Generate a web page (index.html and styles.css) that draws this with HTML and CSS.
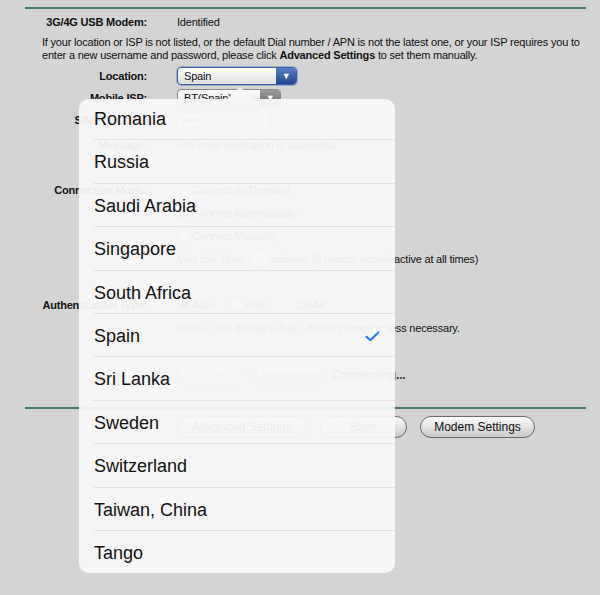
FILE: index.html
```html
<!DOCTYPE html>
<html lang="en">
<head>
  <meta charset="UTF-8" />
  <title>3G/4G Settings</title>
  <link rel="stylesheet" href="styles.css">
</head>
<body>
  <div class="page">
    <div class="rule rule-top"></div>

    <div class="row first">
      <div class="label">3G/4G USB Modem:</div>
      <div class="value">Identified</div>
    </div>

    <p class="hint">If your location or ISP is not listed, or the default Dial number / APN is not the latest one, or your ISP requires you to<br>enter a new username and password, please click <b>Advanced Settings</b> to set them manually.</p>

    <div class="row loc">
      <div class="label">Location:</div>
      <div class="value">
        <div class="select active" style="width: 120px;">
          <span class="select-text">Spain</span>
          <span class="select-arrow">&#9660;</span>
        </div>
      </div>
    </div>

    <div class="row isp">
      <div class="label">Mobile ISP:</div>
      <div class="value">
        <div class="select" style="width: 104px;">
          <span class="select-text">BT(Spain)</span>
          <span class="select-arrow">&#9660;</span>
        </div>
      </div>
    </div>

    <div class="row sim">
      <div class="label">SIM PIN Code:</div>
      <div class="value"><div class="field pin">&bull;&bull;&bull;&bull;</div></div>
    </div>

    <div class="row msg">
      <div class="label">Message:</div>
      <div class="value">PIN code verification is successful</div>
    </div>

    <div class="row section">
      <div class="label">Connection Mode:</div>
      <div class="value"><span class="radio"></span>Connect on Demand</div>
    </div>
    <div class="row">
      <div class="label"></div>
      <div class="value"><span class="radio on"></span>Connect Automatically</div>
    </div>
    <div class="row">
      <div class="label"></div>
      <div class="value"><span class="radio"></span>Connect Manually</div>
    </div>
    <div class="row">
      <div class="label"></div>
      <div class="value">Max Idle Time: <span class="field idle"></span> minutes (0 means remain active at all times)</div>
    </div>

    <div class="row section auth">
      <div class="label">Authentication Type:</div>
      <div class="value">
        <span class="radio on"></span>Auto
        <span class="radio spaced"></span>PAP
        <span class="radio spaced"></span>CHAP
      </div>
    </div>
    <div class="row">
      <div class="label"></div>
      <div class="value"><span class="notice">Notice:</span> The default is Auto, do not change unless necessary.</div>
    </div>

    <div class="row section">
      <div class="label"></div>
      <div class="value buttons">
        <button class="pill off" style="width: 64px;">Connect</button>
        <button class="pill dim" style="width: 70px;">Disconnect</button>
        <span class="status">Connecting...</span>
      </div>
    </div>

    <div class="rule rule-bottom"></div>

    <div class="row actions">
      <div class="label"></div>
      <div class="value buttons">
        <button class="pill" style="width: 130px;">Advanced Settings</button>
        <button class="pill" style="width: 87px;">Save</button>
        <button class="pill" style="width: 115px;">Modem Settings</button>
      </div>
    </div>

    <div class="popover">
      <div class="popover-arrow"></div>
      <ul class="country-list">
        <li>Romania</li>
        <li>Russia</li>
        <li>Saudi Arabia</li>
        <li>Singapore</li>
        <li>South Africa</li>
        <li class="selected">Spain
          <svg class="check" width="15" height="11" viewBox="0 0 15 11"><path d="M1.5 5.8 L5.3 9.3 L13.5 1.3" fill="none" stroke="#1a7cf5" stroke-width="2" stroke-linecap="round" stroke-linejoin="round"/></svg>
        </li>
        <li>Sri Lanka</li>
        <li>Sweden</li>
        <li>Switzerland</li>
        <li>Taiwan, China</li>
        <li>Tango</li>
      </ul>
    </div>
  </div>
</body>
</html>
```

FILE: styles.css
```css
body {
  margin: 0;
  background: #d4d4d4;
  font-family: 'Liberation Sans', Helvetica, Arial, sans-serif;
  font-size: 11px;
  letter-spacing: -0.2px;
  color: #111;
}

.page {
  position: relative;
  height: 595px;
  overflow: hidden;
  padding-top: 7px;
  box-sizing: border-box;
}

.rule {
  height: 2px;
  background: #4b7a63;
  margin: 0 14px 0 25px;
}

.row {
  display: grid;
  grid-template-columns: 147px 1fr;
  column-gap: 30px;
  height: 18px;
  line-height: 18px;
  margin-top: 5px;
  white-space: nowrap;
}

.row.first { margin-top: 4px; }
.row.loc { margin-top: 5px; }
.row.isp { margin-top: 4px; }
.row.sim { margin-top: 4px; }
.row.msg { margin-top: 7px; }
.row.section { margin-top: 27px; }
.row.auth { margin-top: 28px; }
.row.actions { margin-top: 7px; height: 22px; }

.rule-bottom { margin-top: 25px; }

.label {
  text-align: right;
  font-weight: bold;
}

.value {
  display: flex;
  align-items: center;
}

.hint {
  margin: 5px 0 0 42px;
  line-height: 13px;
  white-space: nowrap;
}

.select {
  position: relative;
  height: 18px;
  box-sizing: border-box;
  border: 1px solid #8a8a8a;
  border-radius: 4px;
  background: linear-gradient(#fdfdfd, #dedede);
  display: flex;
  align-items: center;
  overflow: hidden;
}

.select.active {
  border-color: #3a5da6;
  box-shadow: 0 0 0 1px rgba(70, 110, 190, 0.35);
}

.select-text {
  flex: 1;
  padding-left: 6px;
  font-size: 11px;
}

.select-arrow {
  width: 20px;
  height: 100%;
  background: linear-gradient(#9a9a9a, #6d6d6d);
  color: #fff;
  font-size: 9px;
  text-align: center;
  line-height: 17px;
}

.select.active .select-arrow {
  background: linear-gradient(#5b7ec8, #23468f);
}

.field {
  height: 16px;
  box-sizing: border-box;
  border: 1px solid #aaa;
  background: #fff;
  line-height: 14px;
}

.field.pin {
  width: 93px;
  padding-left: 4px;
  color: #555;
}

.field.idle {
  display: inline-block;
  width: 18px;
  margin: 0 4px;
}

.radio {
  display: inline-block;
  width: 11px;
  height: 11px;
  border: 1px solid #888;
  border-radius: 50%;
  background: linear-gradient(#fff, #ddd);
  margin-right: 2px;
}

.radio.on {
  background: radial-gradient(circle, #444 0 3px, #bbb 4px);
}

.radio.spaced { margin-left: 16px; }

.notice { color: #e0201c; margin-right: 3px; }

.buttons { gap: 13px; }

.pill {
  height: 22px;
  border: 1px solid #6b6b6b;
  border-radius: 11px;
  background: linear-gradient(#fbfbfb, #c9c9c9);
  font-family: 'Liberation Sans', Helvetica, Arial, sans-serif;
  font-size: 12px;
  color: #111;
  padding: 0;
}

.pill.off { color: #c8c8c8; border-color: #aaa; }
.pill.dim { color: #888; border-color: #999; font-size: 11px; }

.status {
  font-weight: bold;
  font-size: 12px;
  color: #333;
  margin-left: -5px;
}

.popover {
  position: absolute;
  left: 79px;
  top: 99px;
  width: 316px;
  height: 474px;
  border-radius: 10px;
  background: rgba(248, 248, 248, 0.95);
  letter-spacing: 0;
}

.popover-arrow {
  position: absolute;
  left: 148px;
  top: -12px;
  width: 0;
  height: 0;
  border-left: 13px solid transparent;
  border-right: 13px solid transparent;
  border-bottom: 12px solid rgba(248, 248, 248, 0.95);
}

.country-list {
  list-style: none;
  margin: -2px 0 0;
  padding: 0 0 0 15px;
  height: 100%;
  overflow: hidden;
}

.country-list li {
  position: relative;
  height: 43.4px;
  line-height: 44px;
  box-sizing: border-box;
  border-bottom: 1px solid #e2e2e2;
  font-size: 18px;
  color: #111;
}

.country-list li:last-child { border-bottom: none; }

.check {
  position: absolute;
  right: 15px;
  top: 17px;
}
```
